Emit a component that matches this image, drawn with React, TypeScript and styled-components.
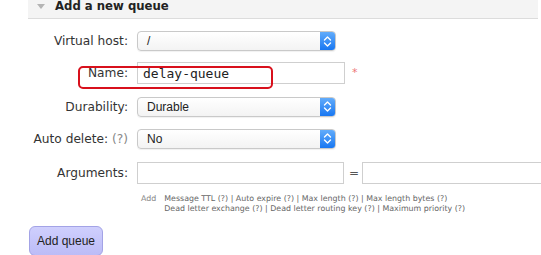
import React from "react";
import styled, { createGlobalStyle } from "styled-components";

const Global = createGlobalStyle`
  html, body { margin: 0; padding: 0; background: #fff; overflow: hidden; }
  body { font-family: "DejaVu Sans", Verdana, sans-serif; color: #333; }
`;

const Page = styled.div`
  width: 541px;
  height: 255px;
  position: relative;
  overflow: hidden;
`;

const Header = styled.div`
  margin-left: 28px;
  height: 19px;
  width: 510px;
  background: #f4f4f4;
  border-bottom: 1px solid #dcdcdc;
  box-sizing: border-box;
  display: flex;
  align-items: flex-start;
  padding-left: 9px;
`;

const Triangle = styled.span`
  flex: none;
  width: 0;
  height: 0;
  border-left: 4px solid transparent;
  border-right: 4px solid transparent;
  border-top: 5px solid #b4b4b4;
  margin-top: 4px;
  margin-right: 10px;
`;

const Title = styled.h2`
  margin: 0;
  font-size: 11.7px;
  line-height: 12px;
  font-weight: bold;
  color: #222;
`;

const Form = styled.div`
  display: flex;
  flex-direction: column;
  padding-top: 8px;
`;

const Row = styled.div<{ $h: number }>`
  display: grid;
  grid-template-columns: 128px auto;
  column-gap: 9px;
  align-items: center;
  height: ${(p) => p.$h}px;
`;

const Label = styled.label`
  text-align: right;
  font-size: 12.2px;
  color: #333;
  white-space: nowrap;
`;

const Help = styled.span`
  color: #888;
`;

const Field = styled.div`
  display: flex;
  align-items: center;
`;

const Select = styled.div`
  width: 199px;
  height: 20px;
  box-sizing: border-box;
  border: 1px solid #c9c9c9;
  border-radius: 4px;
  background: linear-gradient(#ffffff, #f3f3f3);
  display: flex;
  align-items: center;
  overflow: hidden;
  box-shadow: 0 1px 1px rgba(0, 0, 0, 0.06);
`;

const SelectText = styled.span`
  flex: 1;
  padding-left: 9px;
  font-family: "Liberation Sans", Arial, sans-serif;
  font-size: 12px;
  color: #222;
`;

const Stepper = styled.span`
  width: 15px;
  height: 100%;
  background: linear-gradient(#62acfb, #1877f2);
  display: flex;
  align-items: center;
  justify-content: center;
`;

const Input = styled.div<{ $w: number }>`
  width: ${(p) => p.$w}px;
  flex: none;
  height: 22px;
  box-sizing: border-box;
  border: 1px solid #cfcfcf;
  background: #fff;
  display: flex;
  align-items: center;
  padding-left: 5px;
  font-family: "DejaVu Sans Mono", "Liberation Mono", monospace;
  font-size: 13px;
  color: #222;
`;

const Required = styled.span`
  color: #e77;
  font-size: 11px;
  margin: -2px 0 0 7px;
`;

const Equals = styled.span`
  font-size: 12px;
  color: #555;
  margin: 0 3px 0 5px;
`;

const HelpBlock = styled.div`
  display: flex;
  margin-left: 141px;
  margin-top: 4px;
  gap: 8px;
  font-size: 7.9px;
  line-height: 10px;
  color: #666;
`;

const AddWord = styled.span`
  color: #888;
`;

const Lines = styled.div`
  display: flex;
  flex-direction: column;
`;

const Button = styled.button`
  margin: 12px 0 0 29px;
  width: 74px;
  height: 30px;
  border: 1px solid #a3a3e6;
  border-radius: 6px;
  background: linear-gradient(#cfcffd, #bcbcf7);
  font-family: "Liberation Sans", Arial, sans-serif;
  font-size: 12px;
  color: #222;
  padding: 0;
  text-align: center;
  align-self: flex-start;
`;

const Highlight = styled.div`
  position: absolute;
  left: 78px;
  top: 66px;
  width: 195px;
  height: 23px;
  box-sizing: border-box;
  border: 2.5px solid #d8101c;
  border-radius: 5px;
  pointer-events: none;
`;

const Chevrons = () => (
  <svg width="9" height="13" viewBox="0 0 9 13">
    <path d="M1.5 5 L4.5 2 L7.5 5" fill="none" stroke="#fff" strokeWidth="1.4" strokeLinecap="round" strokeLinejoin="round" />
    <path d="M1.5 8 L4.5 11 L7.5 8" fill="none" stroke="#fff" strokeWidth="1.4" strokeLinecap="round" strokeLinejoin="round" />
  </svg>
);

const SelectBox = ({ value }: { value: string }) => (
  <Select>
    <SelectText>{value}</SelectText>
    <Stepper>
      <Chevrons />
    </Stepper>
  </Select>
);

export default function App() {
  return (
    <Page>
      <Global />
      <Header>
        <Triangle />
        <Title>Add a new queue</Title>
      </Header>
      <Form>
        <Row $h={28}>
          <Label>Virtual host:</Label>
          <SelectBox value="/" />
        </Row>
        <Row $h={36}>
          <Label>Name:</Label>
          <Field>
            <Input $w={208}>delay-queue</Input>
            <Required>*</Required>
          </Field>
        </Row>
        <Row $h={31}>
          <Label>Durability:</Label>
          <SelectBox value="Durable" />
        </Row>
        <Row $h={33}>
          <Label>
            Auto delete: <Help>(?)</Help>
          </Label>
          <SelectBox value="No" />
        </Row>
        <Row $h={35}>
          <Label>Arguments:</Label>
          <Field>
            <Input $w={207} />
            <Equals>=</Equals>
            <Input $w={207} />
          </Field>
        </Row>
        <HelpBlock>
          <AddWord>Add</AddWord>
          <Lines>
            <span>Message TTL (?) | Auto expire (?) | Max length (?) | Max length bytes (?)</span>
            <span>Dead letter exchange (?) | Dead letter routing key (?) | Maximum priority (?)</span>
          </Lines>
        </HelpBlock>
        <Button>Add queue</Button>
      </Form>
      <Highlight />
    </Page>
  );
}
